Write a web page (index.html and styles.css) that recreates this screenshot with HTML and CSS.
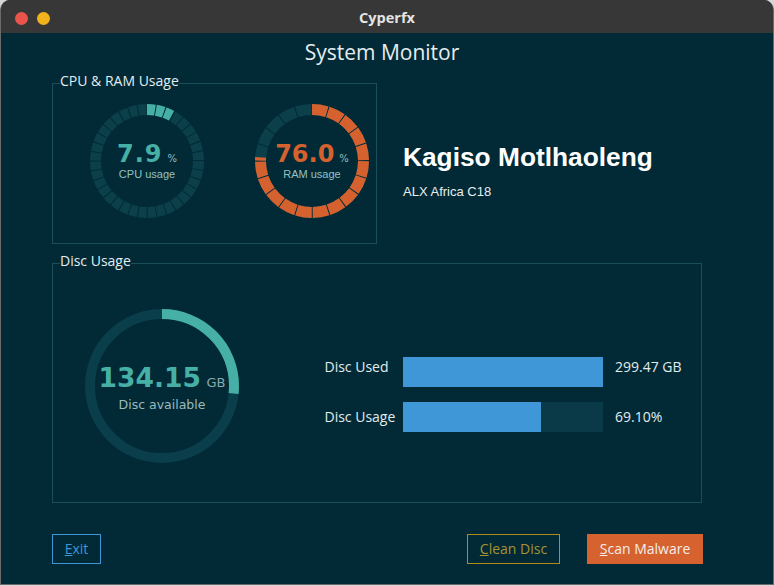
FILE: index.html
```html
<!DOCTYPE html>
<html lang="en">
<head>
<meta charset="utf-8">
<title>Cyperfx</title>
<link rel="stylesheet" href="styles.css">
</head>
<body>
<div class="window">
  <header class="titlebar">
    <div class="lights">
      <span class="light light-red"></span>
      <span class="light light-yellow"></span>
    </div>
    <div class="title">Cyperfx</div>
    <div></div>
  </header>

  <main class="content">
    <h1 class="heading">System Monitor</h1>

    <div class="top-row">
      <fieldset class="group group-usage">
        <legend class="group-legend">CPU &amp; RAM Usage</legend>
        <div class="gauges">
          <div class="gauge gauge-small">
            <svg class="gauge-svg" width="114" height="114" viewBox="0 0 114 114">
              <circle cx="57" cy="57" r="51.5" fill="none" stroke="#0b404b" stroke-width="11" stroke-dasharray="7.988 1" transform="rotate(-90 57 57)"/>
              <circle cx="57" cy="57" r="51.5" fill="none" stroke="#47b0a6" stroke-width="11" stroke-dasharray="7.988 1 7.988 1 7.588 400" transform="rotate(-90 57 57)"/>
            </svg>
            <div class="gauge-label">
              <div class="gauge-value value-cpu">7.9<span class="gauge-unit">%</span></div>
              <div class="gauge-caption">CPU usage</div>
            </div>
          </div>
          <div class="gauge gauge-small">
            <svg class="gauge-svg" width="114" height="114" viewBox="0 0 114 114">
              <circle cx="57" cy="57" r="51.5" fill="none" stroke="#0b404b" stroke-width="11" stroke-dasharray="15.179 1" transform="rotate(-90 57 57)"/>
              <circle cx="57" cy="57" r="51.5" fill="none" stroke="#d4612e" stroke-width="11" stroke-dasharray="15.179 1 15.179 1 15.179 1 15.179 1 15.179 1 15.179 1 15.179 1 15.179 1 15.179 1 15.179 1 15.179 1 15.179 1 15.179 1 15.179 1 15.179 1 3.23 400" transform="rotate(-90 57 57)"/>
            </svg>
            <div class="gauge-label">
              <div class="gauge-value value-ram">76.0<span class="gauge-unit">%</span></div>
              <div class="gauge-caption">RAM usage</div>
            </div>
          </div>
        </div>
      </fieldset>

      <div class="profile">
        <div class="profile-name">Kagiso Motlhaoleng</div>
        <div class="profile-org">ALX Africa C18</div>
      </div>
    </div>

    <fieldset class="group group-disc">
      <legend class="group-legend">Disc Usage</legend>
      <div class="disc-body">
        <div class="gauge gauge-disc">
          <svg class="gauge-svg" width="154" height="154" viewBox="0 0 154 154">
            <circle cx="77" cy="77" r="72" fill="none" stroke="#0a3e4a" stroke-width="10"/>
            <circle cx="77" cy="77" r="72" fill="none" stroke="#47b0a6" stroke-width="10" stroke-dasharray="120.6 500" transform="rotate(-90 77 77)"/>
          </svg>
          <div class="gauge-label disc-label">
            <div class="disc-value"><span class="disc-number">134.15</span><span class="disc-unit">GB</span></div>
            <div class="disc-caption">Disc available</div>
          </div>
        </div>

        <div class="bars">
          <div class="bar-label row-top">Disc Used</div>
          <div class="bar"><div class="bar-fill" style="width: 100%"></div></div>
          <div class="bar-value row-top">299.47 GB</div>

          <div class="bar-label row-mid">Disc Usage</div>
          <div class="bar"><div class="bar-fill" style="width: 69.1%"></div></div>
          <div class="bar-value row-mid">69.10%</div>
        </div>
      </div>
    </fieldset>

    <div class="actions">
      <button class="btn btn-exit"><span class="mnemonic">E</span>xit</button>
      <button class="btn btn-clean"><span class="mnemonic">C</span>lean Disc</button>
      <button class="btn btn-scan"><span class="mnemonic">S</span>can Malware</button>
    </div>
  </main>
</div>
</body>
</html>
```

FILE: styles.css
```css
* {
  box-sizing: border-box;
}

html,
body {
  margin: 0;
  padding: 0;
}

body {
  width: 774px;
  height: 586px;
  overflow: hidden;
  background: #d6d6d6;
  font-family: "Open Sans", "DejaVu Sans", sans-serif;
}

.window {
  width: 774px;
  height: 585px;
  display: flex;
  flex-direction: column;
  background: #012a36;
  border: 1px solid #6a6a6a;
  border-top: none;
  border-radius: 10px 10px 0 0;
  overflow: hidden;
}

/* ---------- title bar ---------- */
.titlebar {
  flex: none;
  height: 33px;
  padding-top: 3px;
  display: grid;
  grid-template-columns: 1fr auto 1fr;
  align-items: center;
  background: #373737;
}

.lights {
  display: flex;
  gap: 9px;
  padding-left: 14px;
}

.light {
  width: 13px;
  height: 13px;
  border-radius: 50%;
}

.light-red {
  background: #ea544b;
}

.light-yellow {
  background: #f1b31c;
}

.title {
  font-size: 14.5px;
  font-weight: 700;
  line-height: 18px;
  color: #e4e4e4;
}

/* ---------- content ---------- */
.content {
  flex: 1;
  display: flex;
  flex-direction: column;
  padding: 7px 70px 0 51px;
}

.heading {
  margin: 0 -60px 9px -51px;
  text-align: center;
  font-size: 21px;
  font-weight: 400;
  line-height: 24px;
  color: #e6edef;
}

.top-row {
  display: flex;
  align-items: flex-start;
}

.group {
  margin: 0;
  padding: 0;
  min-width: 0;
  border: 1px solid #1b4e5a;
}

.group-legend {
  margin-left: 7px;
  padding: 0 0 4px;
  font-size: 14px;
  line-height: 16px;
  color: #e3ecee;
}

.group-usage {
  width: 325px;
}

.gauges {
  display: flex;
  gap: 51px;
  padding: 11px 0 25px 37px;
}

.gauge {
  position: relative;
  flex: none;
}

.gauge-svg {
  display: block;
}

.gauge-label {
  position: absolute;
  inset: 0;
  display: flex;
  flex-direction: column;
  align-items: center;
  justify-content: center;
  padding-top: 1.5px;
}

.gauge-value {
  font-family: "DejaVu Sans", sans-serif;
  font-weight: 700;
  font-size: 24px;
  line-height: 18px;
  white-space: nowrap;
}

.value-cpu {
  color: #47b0a6;
  letter-spacing: 1px;
}

.value-ram {
  color: #d4612e;
}

.gauge-unit {
  margin-left: 5px;
  font-size: 10px;
  font-weight: 400;
  letter-spacing: 0;
  color: #8fbfc1;
}

.gauge-caption {
  margin-top: 2px;
  font-family: "Liberation Sans", Arial, sans-serif;
  font-size: 11px;
  line-height: 9px;
  color: #93c2c4;
}

/* ---------- profile ---------- */
.profile {
  margin-left: 26px;
  padding-top: 69px;
  font-family: "Liberation Sans", Arial, sans-serif;
  color: #ffffff;
}

.profile-name {
  font-size: 26.3px;
  font-weight: 700;
  line-height: 30px;
}

.profile-org {
  margin-top: 11.5px;
  font-size: 13px;
  line-height: 16px;
  color: #e8eef0;
}

/* ---------- disc ---------- */
.group-disc {
  width: 650px;
  margin-top: 9px;
}

.disc-body {
  display: flex;
  align-items: flex-start;
  padding: 36px 0 39px 32px;
}

.disc-label {
  padding-top: 0;
}

.disc-value {
  display: flex;
  align-items: baseline;
  background: #012a36;
  line-height: 31px;
  font-family: "DejaVu Sans", sans-serif;
  white-space: nowrap;
}

.disc-number {
  font-size: 26.5px;
  font-weight: 700;
  color: #47b0a6;
}

.disc-unit {
  margin-left: 5.5px;
  font-size: 13px;
  color: #8aa9ad;
}

.disc-caption {
  font-family: "DejaVu Sans", sans-serif;
  font-size: 12.5px;
  line-height: 13px;
  color: #9bb9bc;
}

.bars {
  margin: 48px 0 0 85.5px;
  display: grid;
  grid-template-columns: 78.5px 200px auto;
  grid-auto-rows: 30px;
  row-gap: 15px;
  font-size: 14px;
  color: #e2ebed;
}

.row-top {
  align-self: start;
  line-height: 20px;
}

.row-mid {
  align-self: center;
  line-height: 30px;
}

.bar-value {
  padding-left: 12px;
  white-space: nowrap;
}

.bar {
  height: 30px;
  background: #0a3a47;
}

.bar-fill {
  height: 100%;
  background: #3f97d7;
}

/* ---------- actions ---------- */
.actions {
  display: flex;
  margin-top: 31px;
}

.btn {
  height: 30px;
  padding: 0;
  display: flex;
  align-items: center;
  justify-content: center;
  font-family: "Open Sans", "DejaVu Sans", sans-serif;
  font-size: 14px;
  line-height: 18px;
  background: transparent;
  border: 1px solid transparent;
}

.mnemonic {
  text-decoration: underline;
}

.btn-exit {
  width: 49px;
  border-color: #3c96d8;
  color: #3c96d8;
}

.btn-clean {
  width: 93px;
  margin-left: auto;
  border-color: #b28a16;
  color: #a69230;
}

.btn-scan {
  width: 116px;
  margin-left: 27px;
  background: #d5622f;
  border-color: #d5622f;
  color: #f4ede9;
}
```
